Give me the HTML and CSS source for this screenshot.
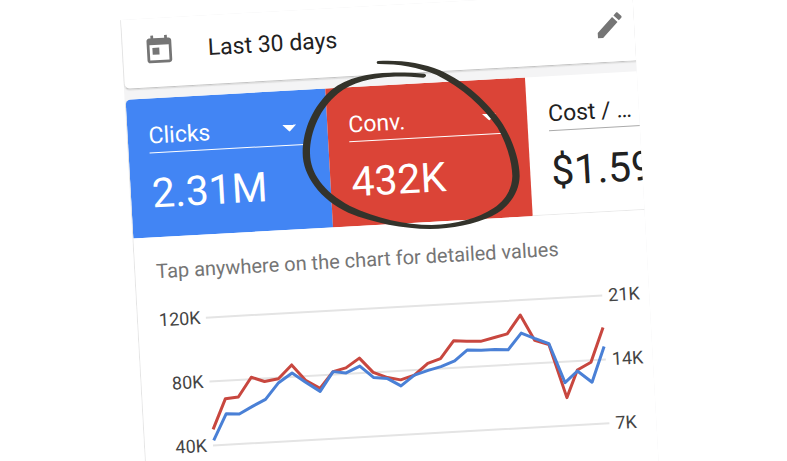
FILE: index.html
```
<!DOCTYPE html>
<html lang="en">
<head>
  <meta charset="UTF-8" />
  <meta name="viewport" content="width=device-width, initial-scale=1.0"/>
  <title>Campaign overview</title>
  <link rel="stylesheet" href="styles.css">
</head>
<body>
  <main class="stage">
    <div class="app">
      <header class="date-bar">
        <svg class="icon" viewBox="0 0 24 24" aria-hidden="true">
          <path d="M19 3h-1V1h-2v2H8V1H6v2H5c-1.1 0-2 .9-2 2v14c0 1.1.9 2 2 2h14c1.1 0 2-.9 2-2V5c0-1.1-.9-2-2-2zm0 16H5V8h14v11zM7 10h5v5H7z"/>
        </svg>
        <button class="date-range" type="button">Last 30 days</button>
        <button class="edit" type="button" aria-label="Edit">
          <svg class="icon" viewBox="0 0 24 24" aria-hidden="true">
            <path d="M3 17.25V21h3.75L17.81 9.94l-3.75-3.75L3 17.25zM20.71 7.04c.39-.39.39-1.02 0-1.41l-2.34-2.34c-.39-.39-1.02-.39-1.41 0l-1.83 1.83 3.75 3.75 1.83-1.83z"/>
          </svg>
        </button>
      </header>

      <section class="card">
        <div class="metrics">
          <div class="metric blue">
            <select class="metric-name" aria-label="First metric"><option>Clicks</option></select>
            <div class="metric-value">2.31M</div>
          </div>
          <div class="metric red">
            <select class="metric-name" aria-label="Second metric"><option>Conv.</option></select>
            <div class="metric-value">432K</div>
          </div>
          <div class="metric plain">
            <select class="metric-name" aria-label="Third metric"><option>Cost / …</option></select>
            <div class="metric-value">$1.59</div>
          </div>
        </div>

        <p class="hint">Tap anywhere on the chart for detailed values</p>

        <div class="chart">
          <div class="axis left"><span>120K</span><span>80K</span><span>40K</span></div>
          <svg class="plot" viewBox="0 0 397 130" role="img" aria-label="Clicks and conversions, last 30 days">
            <path class="grid" d="M0 1H397M0 65H397M0 129H397"/>
            <polyline class="line conv" points="1,113 15,83 28,82 42,63 55,68 69,66 83,53 96,69 110,78 124,62 137,59 151,50 164,65 178,71 191,74 205,70 219,59 232,55 246,38 259,39 273,40 287,37 300,34 314,16 327,42 341,47 356,101 368,74 382,67 396,33"/>
            <polyline class="line clicks" points="1,124 15,98 28,99 42,92 55,86 69,70 83,61 96,71 110,81 124,62 137,64 151,58 164,70 178,72 191,80 205,70 219,66 232,63 246,58 259,48 273,49 287,49 300,50 314,34 327,40 341,46 355,86 368,75 382,87 396,52"/>
          </svg>
          <div class="axis right"><span>21K</span><span>14K</span><span>7K</span></div>
        </div>
      </section>
    </div>

    <!-- hand-drawn ring around the Conv. tile -->
    <svg class="ring" viewBox="0 0 750 570" aria-hidden="true">
      <path d="M264 33C325 29 395 37 450 61C525 95 595 157 638 222C668 270 689 330 689 378C688 425 660 472 605 499C555 523 485 537 420 537C340 536 250 519 175 488C90 450 38 375 38 310C38 235 72 165 125 119C170 82 240 69 300 68C340 67 375 69 403 71Q409 73 408 77Q407 82 400 83C365 80 335 79 305 80C245 83 185 97 145 130C90 175 60 245 60 310C61 370 100 425 180 468C260 506 345 525 425 525C500 523 565 505 610 475C650 447 666 415 667 378C666 335 650 280 622 232C580 170 515 112 440 75C385 51 325 42 267 42Q260 42 260 38Q260 34 264 33Z"/>
    </svg>
  </main>
</body>
</html>
```
FILE: styles.css
```
html {
  overflow: hidden;
}
body {
  margin: 0;
  background: #fff;
  color: #212121;
  font-family: Roboto, "Liberation Sans", sans-serif;
}
button, select {
  margin: 0;
  padding: 0;
  border: 0;
  background: none;
  color: inherit;
  font: inherit;
}
.stage {
  position: relative;
  padding: 20px 155px 0 119px;
}

/* the whole app screen is tilted */
.app {
  overflow: hidden;
  background: #f4f4f5;
  transform: rotate(-3.2deg);
  transform-origin: 0 -20px;
}

.date-bar {
  display: flex;
  align-items: center;
  padding: 16px 8px 20px 20px;
  border: 1px solid #e4e4e4;
  border-width: 0 0 1px 1px;
  border-bottom-color: #c4c4c4;
  border-radius: 0 0 0 6px;
  background: #fff;
  box-shadow: 0 1px 1px #ddd;
}
.icon {
  display: block;
  width: 33px;
  height: 33px;
  fill: #757575;
}
.date-range {
  margin-left: 32px;
  font-size: 23px;
  line-height: 32px;
}
.edit {
  margin-left: auto;
}

.card {
  margin-top: 10px;
  padding-bottom: 64px;
  border-left: 1px solid #e4e4e4;
  border-radius: 6px 0 0 0;
  background: #fff;
}
.metrics {
  display: flex;
  overflow: hidden;
  border-radius: 5px 0 0 0;
}
.metric {
  box-sizing: border-box;
  flex: 0 0 200px;
  height: 139px;
  padding: 21px 24px 0 21px;
}
.blue {
  background: #4285f4;
  color: #fff;
}
.red {
  background: #db4437;
  color: #fff;
}
.plain {
  border-bottom: 1px solid #e8e8e8;
}
.metric-name {
  appearance: none;
  display: block;
  width: 100%;
  height: 34px;
  border-bottom: 1px solid;
  border-radius: 0;
  font-size: 23px;
  line-height: 32px;
  background: url("data:image/svg+xml,%3Csvg xmlns='http://www.w3.org/2000/svg' width='14' height='7'%3E%3Cpath d='M0 0h14l-7 7z' fill='white'/%3E%3C/svg%3E") no-repeat right 7px top 13px;
}
.plain .metric-name {
  border-bottom-color: #aaa;
}
.metric-value {
  margin-top: 16px;
  font-size: 41px;
  line-height: 48px;
}

.hint {
  margin: 20px 21px 0;
  color: #757575;
  font-size: 20px;
  line-height: 28px;
  white-space: nowrap;
}
.chart {
  display: flex;
  align-items: flex-start;
  margin-top: 23px;
  padding: 0 9px 0 21px;
  color: #444;
  font-size: 18px;
  line-height: 24px;
}
.axis {
  display: flex;
  flex-direction: column;
  gap: 40px;
}
.left {
  width: 41px;
  text-align: right;
}
.right {
  width: 32px;
}
.plot {
  flex: 1;
  min-width: 0;
  margin: 11px 6px 0;
  overflow: visible;
}
.grid {
  fill: none;
  stroke: #e4e4e4;
  stroke-width: 2;
}
.line {
  fill: none;
  stroke-width: 3;
  stroke-linejoin: round;
}
.conv {
  stroke: #c8473f;
}
.clicks {
  stroke: #4a80d6;
}

.ring {
  position: absolute;
  top: 50px;
  left: 290px;
  width: 250px;
  height: 190px;
  fill: #33332b;
}
```
